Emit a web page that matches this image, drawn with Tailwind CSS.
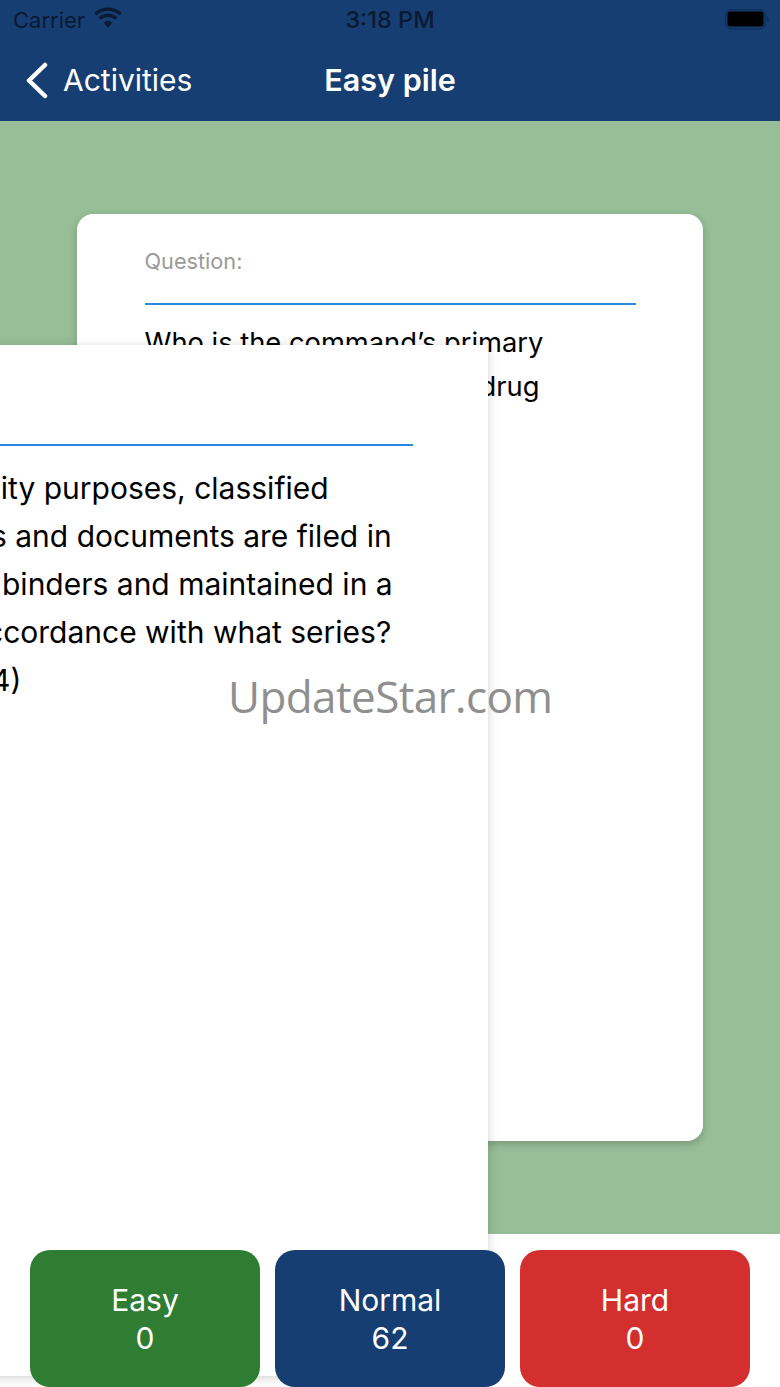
<!DOCTYPE html>
<html><head><meta charset="utf-8"><script src="https://cdn.jsdelivr.net/npm/@tailwindcss/browser@4"></script></head>
<body class="m-0">
<div class="relative w-[780px] h-[1387px] overflow-hidden bg-white flex flex-col font-['Inter','Roboto',sans-serif]">
  <header class="h-[121px] shrink-0 bg-[#163e72] flex flex-col relative z-30">
    <div class="h-[40px] flex items-center justify-between pl-[13px] pr-[11px] text-[22px] text-[#0a1a33]">
      <div class="flex items-center gap-[9px]"><span>Carrier</span>
        <svg width="28" height="22" viewBox="0 0 28 22" class="mt-[-4px]"><path d="M14 21 L9.8 15.6 A6.5 6.5 0 0 1 18.2 15.6 Z" fill="#0a1a33"/><path d="M1.5 7.2 A18 18 0 0 1 26.5 7.2 M5.7 11.6 A12 12 0 0 1 22.3 11.6" fill="none" stroke="#0a1a33" stroke-width="3.4"/></svg>
      </div>
      <span class="absolute left-0 right-0 text-center font-medium text-[23.5px]">3:18 PM</span>
      <svg width="44" height="22" viewBox="0 0 44 22"><rect x="0.75" y="0.75" width="39.5" height="19" rx="5.5" fill="none" stroke="#0e2f5c" stroke-width="1.5"/><rect x="2.5" y="2.5" width="36" height="15" rx="3" fill="#000"/><path d="M42 7.5 a3 3 0 0 1 0 5.5 z" fill="#0e2f5c"/></svg>
    </div>
    <div class="relative flex-1 flex items-center justify-center text-white text-[30px]">
      <div class="absolute left-[24px] top-[21px] flex items-center gap-[14px]">
        <svg width="25" height="38" viewBox="0 0 25 38"><path d="M21 4 L5 19.5 L21 35" fill="none" stroke="#fff" stroke-width="4.5" stroke-linecap="round" stroke-linejoin="round"/></svg>
        <span class="leading-[38px]">Activities</span>
      </div>
      <span class="font-semibold text-[30.5px] mt-[-2px]">Easy pile</span>
    </div>
  </header>

  <main class="h-[1113px] shrink-0 bg-[#97be97]"></main>

  <section class="absolute left-[77px] top-[214px] w-[626px] h-[927px] rounded-[16px] bg-white shadow-[0_3px_8px_rgba(0,0,0,0.2)] pl-[67.5px] pr-[67.5px] pt-[33px] z-10">
    <div class="text-[21.7px] leading-[28px] text-[#9a9a9a] pb-[28px] border-b-2 border-[#2b8ae0]">Question:</div>
    <p class="mt-[16px] text-[27.3px] leading-[44px] text-black">Who is the command’s primary</p>
    <p class="pl-[335px] text-[27.3px] leading-[44px] text-black">drug</p>
  </section>

  <section class="absolute left-[-139px] top-[345px] w-[627px] h-[1031px] bg-white shadow-[0_2px_10px_rgba(0,0,0,0.18)] pr-[75px] pt-[99px] z-20">
    <div class="border-b-2 border-[#2b8ae0]"></div>
    <div class="mt-[18px] pl-[139px] text-[30px] leading-[48px] text-black whitespace-nowrap">
      <p class="ml-[-11px]">rity purposes, classified</p>
      <p class="ml-[-9px]">s and documents are filed in</p>
      <p class="ml-[2px]">binders and maintained in a</p>
      <p class="ml-[-14px]">ccordance with what series?</p>
      <p class="ml-[-9px]">4)</p>
    </div>
  </section>

  <div class="absolute left-[228px] top-[667px] z-40 text-[44px] tracking-[-0.6px] leading-[58px] text-[#8f8f8f] font-['Open_Sans',sans-serif]">UpdateStar.com</div>

  <footer class="absolute left-[30px] top-[1250px] z-40 flex gap-[15px] text-white text-[30px] leading-[38px] text-center">
    <div class="w-[230px] h-[137px] rounded-[20px] bg-[#2e7d32] pt-[31px]">Easy<br>0</div>
    <div class="w-[230px] h-[137px] rounded-[20px] bg-[#163e72] pt-[31px]">Normal<br>62</div>
    <div class="w-[230px] h-[137px] rounded-[20px] bg-[#d32f2f] pt-[31px]">Hard<br>0</div>
  </footer>
</div>
</body></html>
